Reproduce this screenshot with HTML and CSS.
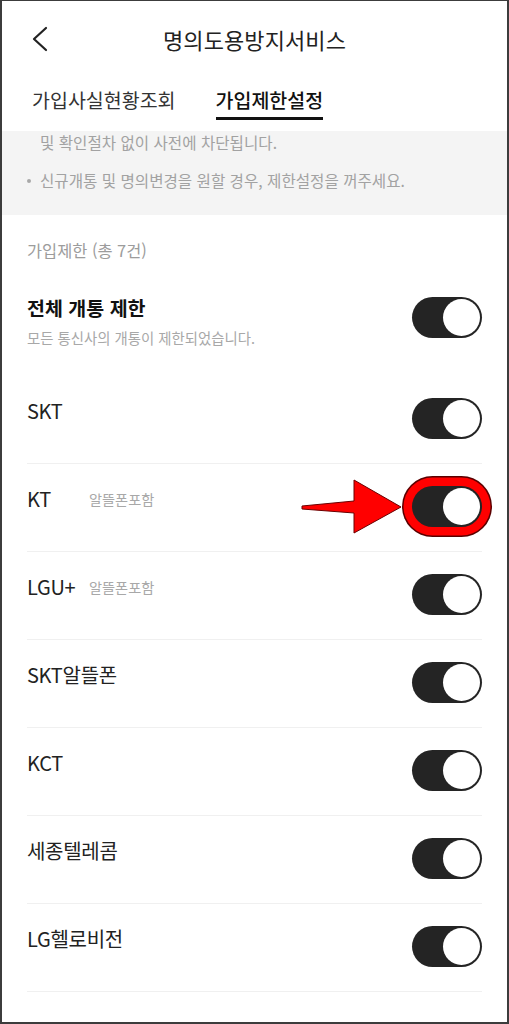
FILE: index.html
```html
<!DOCTYPE html>
<html lang="ko">
<head>
<meta charset="utf-8">
<title>명의도용방지서비스</title>
<link rel="stylesheet" href="styles.css">
</head>
<body>
<div class="frame">
  <header class="topbar">
    <div class="back">
      <svg width="24" height="26" viewBox="0 0 24 26"><path d="M18 2 L6 13 L18 24" fill="none" stroke="#222" stroke-width="2.2" stroke-linecap="round" stroke-linejoin="round"/></svg>
    </div>
    <h1 class="title">명의도용방지서비스</h1>
    <div></div>
  </header>
  <nav class="tabs">
    <span class="tab">가입사실현황조회</span>
    <span class="tab active">가입제한설정</span>
  </nav>
  <section class="notice">
    <p class="cont">및 확인절차 없이 사전에 차단됩니다.</p>
    <p class="bullet">신규개통 및 명의변경을 원할 경우, 제한설정을 꺼주세요.</p>
  </section>
  <div class="section-title">가입제한 (총 7건)</div>
  <ul class="list">
    <li class="row first">
      <div class="text">
        <div class="all-title">전체 개통 제한</div>
        <div class="all-sub">모든 통신사의 개통이 제한되었습니다.</div>
      </div>
      <span class="toggle"></span>
    </li>
    <li class="row">
      <div class="text"><span class="name">SKT</span></div>
      <span class="toggle"></span>
    </li>
    <li class="row">
      <div class="text"><span class="name fixed">KT</span><span class="sub">알뜰폰포함</span></div>
      <span class="toggle marked"></span>
      <svg class="arrow" width="106" height="62" viewBox="0 0 106 62"><polygon points="2,30 54,25 54,4 101,31 54,57 54,37 2,33" fill="#ff0000" stroke="#6a0000" stroke-width="1" stroke-linejoin="miter"/></svg>
    </li>
    <li class="row">
      <div class="text"><span class="name fixed">LGU+</span><span class="sub">알뜰폰포함</span></div>
      <span class="toggle"></span>
    </li>
    <li class="row">
      <div class="text"><span class="name">SKT알뜰폰</span></div>
      <span class="toggle"></span>
    </li>
    <li class="row">
      <div class="text"><span class="name">KCT</span></div>
      <span class="toggle"></span>
    </li>
    <li class="row">
      <div class="text"><span class="name">세종텔레콤</span></div>
      <span class="toggle"></span>
    </li>
    <li class="row">
      <div class="text"><span class="name">LG헬로비전</span></div>
      <span class="toggle"></span>
    </li>
  </ul>
</div>
</body>
</html>
```
FILE: styles.css
```css
* { box-sizing: border-box; }
html, body { margin: 0; padding: 0; background: #fff; }
body {
  font-family: "Noto Sans CJK KR", "Noto Sans", sans-serif;
  color: #222;
}
.frame {
  width: 509px;
  height: 1024px;
  border: 2px solid #3c3c3c;
  border-top-width: 1px;
  overflow: hidden;
  background: #fff;
}
.topbar {
  display: grid;
  grid-template-columns: 1fr auto 1fr;
  align-items: center;
  height: 75px;
}
.back { padding-left: 26px; display: flex; align-items: center; }
.back svg { display: block; }
.title {
  margin: 0;
  font-size: 22px;
  font-weight: 400;
  line-height: 28px;
  letter-spacing: 0.1px;
  color: #222;
}
.tabs {
  display: flex;
  gap: 40px;
  padding: 12px 0 11px 30px;
}
.tab {
  font-size: 19.5px;
  line-height: 24px;
  color: #333;
  padding-bottom: 5px;
  border-bottom: 3px solid transparent;
}
.tab.active {
  font-weight: 500;
  color: #111;
  border-bottom-color: #111;
}
.notice {
  background: #f4f4f4;
  padding: 0 0 24px 0;
}
.notice p {
  margin: 0;
  font-size: 15.6px;
  line-height: 22px;
  color: #a2a2a2;
  padding-left: 38px;
  position: relative;
}
.notice .bullet { margin-top: 16px; }
.notice .bullet::before {
  content: "";
  position: absolute;
  left: 25px;
  top: 10px;
  width: 4px;
  height: 4px;
  border-radius: 50%;
  background: #a8a8a8;
}
.section-title {
  padding: 24px 25px 14px;
  font-size: 16.4px;
  line-height: 22px;
  color: #9c9c9c;
}
.list {
  list-style: none;
  margin: 0;
  padding: 0 25px;
}
.row {
  position: relative;
  display: flex;
  align-items: flex-start;
  justify-content: space-between;
  padding: 22px 0 24px;
  border-bottom: 1px solid #f0f0f0;
}
.row.first {
  border-bottom: none;
  padding-bottom: 29px;
}
.text {
  display: flex;
  flex-direction: column;
}
.row:not(.first) .text {
  flex-direction: row;
  align-items: center;
  height: 26px;
}
.all-title {
  font-size: 19.5px;
  font-weight: 700;
  line-height: 22px;
  color: #111;
}
.all-sub {
  margin-top: 10px;
  font-size: 14.4px;
  line-height: 18px;
  color: #a8a8a8;
}
.name {
  font-size: 20px;
  line-height: 26px;
  color: #222;
  letter-spacing: -0.3px;
}
.name.fixed { min-width: 62px; }
.sub {
  font-size: 14.2px;
  line-height: 26px;
  color: #a8a8a8;
}
.toggle {
  position: relative;
  flex: none;
  width: 70px;
  height: 41px;
  border-radius: 21px;
  background: #242424;
}
.toggle::after {
  content: "";
  position: absolute;
  right: 2px;
  top: 2px;
  width: 37px;
  height: 37px;
  border-radius: 50%;
  background: #fff;
}
.toggle.marked {
  box-shadow: 0 0 0 8.5px #ff0000, 0 0 0 10px #5a0000;
}
.arrow {
  position: absolute;
  left: 273px;
  top: 12px;
}
```
